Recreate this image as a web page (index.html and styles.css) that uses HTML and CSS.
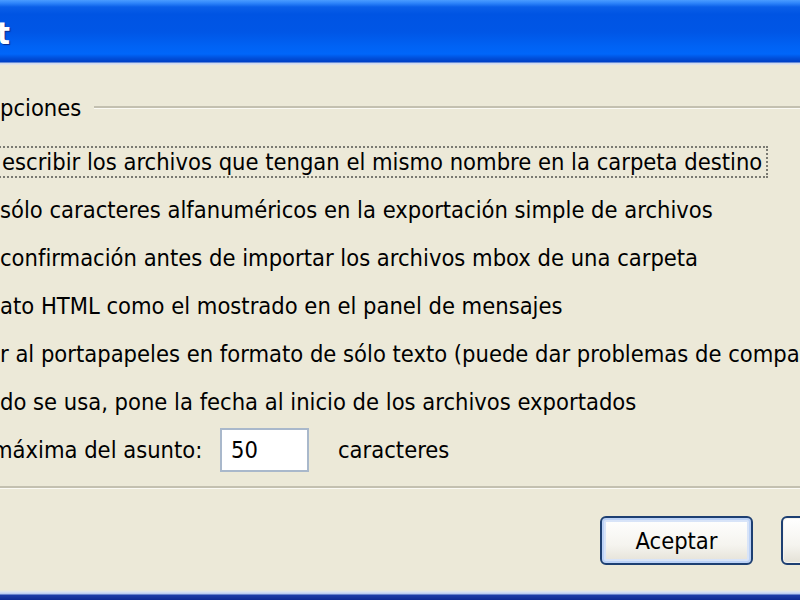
FILE: index.html
```html
<!doctype html>
<html lang="es">
<head>

    <title>Opciones de exportación</title>

    <link rel="stylesheet" href="styles.css">

</head>
<body>

    <div class="Window">

        <!-- title bar (window is wider than the view, only the end of the title shows) -->
        <div class="TitleBar"><span class="Title">t</span></div>

        <div class="Dialog">

            <!-- group: Opciones -->
            <div class="GroupHead">
                <span class="GroupLabel">pciones</span>
                <div class="Rule"></div>
            </div>

            <div class="Options">
                <div class="Option"><span class="Focus">escribir los archivos que tengan el mismo nombre en la carpeta destino</span></div>
                <div class="Option">sólo caracteres alfanuméricos en la exportación simple de archivos</div>
                <div class="Option">confirmación antes de importar los archivos mbox de una carpeta</div>
                <div class="Option">ato HTML como el mostrado en el panel de mensajes</div>
                <div class="Option">r al portapapeles en formato de sólo texto (puede dar problemas de compatibilidad)</div>
                <div class="Option">do se usa, pone la fecha al inicio de los archivos exportados</div>
                <div class="Option">
                    <span class="FieldLabel"><span class="Cut">máxima del asunto:</span></span>
                    <input class="Number" type="text" value="50" />
                    <span>caracteres</span>
                </div>
            </div>

            <div class="Separator"></div>

            <div class="Buttons">
                <button class="Default">Aceptar</button>
                <button>Cancelar</button>
            </div>

        </div>

        <div class="Frame"></div>

    </div>

</body>
</html>
```

FILE: styles.css
```css
*, *:before, *:after {
    box-sizing: border-box;
    margin: 0;
    padding: 0;
}

* {
    font-family: "DejaVu Sans", "Liberation Sans", sans-serif;
    font-stretch: condensed;
}

html, body {
    width: 800px;
    height: 600px;
    overflow: hidden;
    background: #ece9d8;
}

.Window {
    display: flex;
    flex-direction: column;
    height: 600px;
}

.TitleBar {
    flex: none;
    height: 65px;
    padding-top: 16px;
    background: linear-gradient(#4a9cff 0, #2f86fb 3px, #0a5fe8 7px, #0054e3 14px, #0056e6 32px, #0062f4 46px, #0066fa 54px, #0050dc 58px, #003fc4 62px, #c9d6ee 63px, #e4e6ec 65px);
}

.Title {
    display: block;
    margin-left: -3px;
    color: #fff;
    font-size: 30px;
    font-weight: bold;
    line-height: 36px;
    text-shadow: 1px 1px 1px #0a2a8c;
}

.Dialog {
    flex: 1;
    display: flex;
    flex-direction: column;
    color: #000;
    font-size: 23.5px;
    white-space: nowrap;
}

.GroupHead {
    display: flex;
    align-items: center;
    gap: 13px;
    height: 30px;
    margin-top: 28px;
}

.Rule {
    flex: 1;
    margin-top: -2px;
    border-top: 2px solid #c3c0b0;
    border-bottom: 1px solid #fbfaf4;
}

.Options {
    margin-top: 15px;
}

.Option {
    display: flex;
    align-items: center;
    height: 48px;
}

.Focus {
    margin-left: -8px;
    padding: 0 4px 0 8px;
    height: 32px;
    line-height: 28px;
    border: 2px dotted #7a7a72;
}

.FieldLabel {
    width: 220px;
    overflow: hidden;
}

.Cut {
    margin-left: -8px;
}

.Number {
    width: 89px;
    height: 44px;
    margin-right: 29px;
    padding-left: 9px;
    border: 2px solid #a9b8cb;
    background: #fff;
    color: #000;
    font-size: 23.5px;
    outline: none;
}

.Separator {
    margin-top: 12px;
    border-top: 2px solid #c3c0b0;
    border-bottom: 1px solid #fbfaf4;
}

.Buttons {
    display: flex;
    gap: 28px;
    margin-top: 27px;
    padding-left: 600px;
}

button {
    flex: none;
    width: 153px;
    height: 49px;
    border: 2px solid #1d3f72;
    border-radius: 6px;
    background: linear-gradient(#ffffff, #f5f4ef 60%, #e4e1d6);
    color: #000;
    font-size: 23.5px;
    box-shadow: inset 0 0 0 1px #f4f3ee;
}

.Default {
    box-shadow: inset 0 0 0 2px #bcd2f6, inset 0 0 0 4px #d8e4f8;
}

.Frame {
    flex: none;
    height: 10px;
    margin-top: auto;
    background: linear-gradient(#ece9d8 0, #d8e2f4 2px, #b4c8f0 4px, #1d3ea8 5px, #0d2a94 10px);
}
```
